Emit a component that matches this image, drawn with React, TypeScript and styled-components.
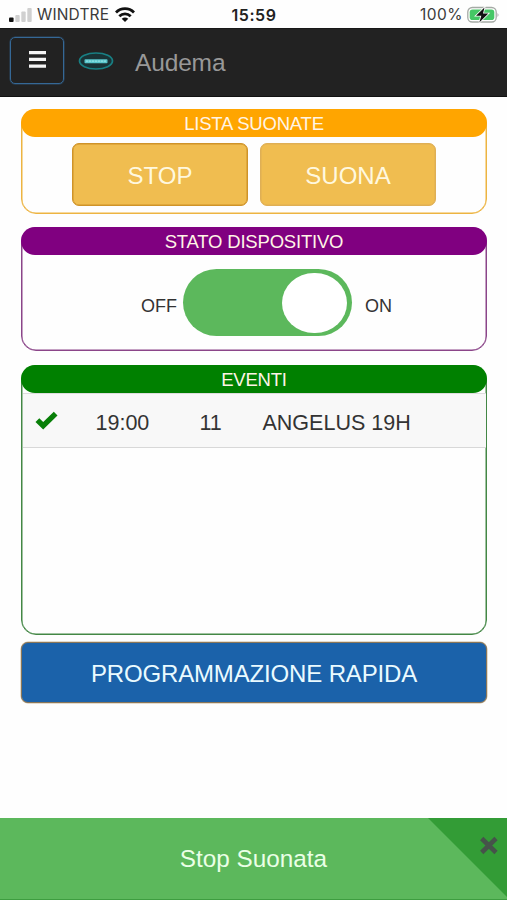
import React from "react";
import styled, { createGlobalStyle } from "styled-components";

const GlobalStyle = createGlobalStyle`
  * { box-sizing: border-box; }
  body {
    margin: 0;
    background: #fefefe;
    color: #333;
    font-family: "Liberation Sans", Arial, sans-serif;
  }
`;

const Screen = styled.div`
  display: flex;
  flex-direction: column;
  width: 507px;
  height: 900px;
  overflow: hidden;
`;

const StatusBar = styled.header`
  display: grid;
  grid-template-columns: 1fr auto 1fr;
  align-items: center;
  height: 28px;
  padding: 1px 8px 0 9px;
  color: #3a3a3a;
  font: 15.5px/20px Inter, sans-serif;
`;

const StatusGroup = styled.div<{ $end?: boolean }>`
  display: flex;
  align-items: center;
  justify-content: ${(p) => (p.$end ? "flex-end" : "flex-start")};
  gap: ${(p) => (p.$end ? "4px" : "6px")};
`;

const Carrier = styled.span`
  margin-left: -1px;
  letter-spacing: 0.15px;
`;

const Charge = styled.span`
  letter-spacing: 0.5px;
`;

const Clock = styled.span`
  color: #222;
  font-size: 16px;
  font-weight: 600;
  letter-spacing: 0.6px;
`;

const Navbar = styled.nav`
  display: flex;
  align-items: center;
  height: 69px;
  padding: 0 10px 4px;
  background: #222;
  border-top: 1px solid #181818;
  border-bottom: 1px solid #111;
`;

const MenuButton = styled.button`
  display: grid;
  place-items: center;
  width: 54px;
  height: 47px;
  padding: 0 0 2px;
  background: transparent;
  border: 1px solid #356896;
  border-radius: 5px;
  box-shadow: 0 0 0 0.5px #2c4a66;
`;

const Logo = styled.svg`
  margin: 1px 0 0 14px;
`;

const Brand = styled.span`
  margin: 4px 0 0 21px;
  color: #989898;
  font-size: 24.5px;
  line-height: 30px;
  letter-spacing: -0.15px;
`;

const Main = styled.main`
  display: flex;
  flex-direction: column;
  flex: 1;
  padding: 12px 20px 0 21px;
`;

const Panel = styled.section<{ $color: string; $line: string; $height: number; $gap: number }>`
  height: ${(p) => p.$height}px;
  margin-bottom: ${(p) => p.$gap}px;
  border: 1px solid ${(p) => p.$line};
  border-radius: 15px;
  box-shadow: inset 0 0 0 0.5px ${(p) => p.$line};
  --accent: ${(p) => p.$color};
`;

const PanelTitle = styled.h2`
  height: 28px;
  margin: -1px -1px 0;
  background: var(--accent);
  border-radius: 14px;
  color: #fff4e6;
  font-size: 18.5px;
  font-weight: 400;
  line-height: 30px;
  letter-spacing: -0.2px;
  text-align: center;
`;

const ButtonRow = styled.div`
  display: flex;
  justify-content: center;
  gap: 12px;
  margin-top: 6px;
`;

const PlayButton = styled.button<{ $active?: boolean }>`
  width: 176px;
  height: 63px;
  padding: 2px 0 0;
  background: #f0bd50;
  border: 1px solid ${(p) => (p.$active ? "#cf9329" : "#dfaf55")};
  border-radius: 7px;
  box-shadow: inset 0 0 0 0.5px ${(p) => (p.$active ? "#cf9329" : "#dfaf55")};
  color: #fff8df;
  font: 24px/28px "Liberation Sans", Arial, sans-serif;
`;

const SwitchRow = styled.div`
  display: flex;
  align-items: center;
  margin: 14px 0 0 119px;
  font-size: 18px;
  line-height: 24px;
`;

const SwitchLabel = styled.span`
  padding-top: 6px;
`;

const Switch = styled.div`
  display: flex;
  justify-content: flex-end;
  width: 169px;
  height: 67px;
  margin: 0 13px 0 6px;
  padding: 4px 5px 3px;
  background: #5cb85c;
  border-radius: 34px;
`;

const Knob = styled.div`
  width: 65px;
  height: 60px;
  background: #fff;
  border-radius: 32px / 30px;
`;

const EventRow = styled.div`
  display: grid;
  grid-template-columns: 73px 104px 63px 1fr;
  align-items: center;
  height: 55px;
  margin: 0 0.5px;
  padding: 4px 0 0;
  background: #f8f8f8;
  border-top: 1px solid #ddd;
  border-bottom: 1px solid #d8d8d8;
  font-size: 21.5px;
  line-height: 28px;
`;

const Check = styled.svg`
  margin: -4px 0 0 12px;
`;

const ScheduleButton = styled.button`
  height: 61px;
  padding: 2px 0 0;
  background: #1b62aa;
  border: 1px solid #8a7658;
  border-radius: 7px;
  box-shadow: 0 0 0 0.5px #c9b79a;
  color: #eafaff;
  font: 24px/28px "Liberation Sans", Arial, sans-serif;
  letter-spacing: -0.15px;
`;

const Toast = styled.footer`
  position: relative;
  display: grid;
  place-items: center;
  height: 82px;
  background: #5cb85c;
  border-bottom: 1px solid #3e9d40;
  color: #eaffe6;
  font-size: 24.3px;
  line-height: 28px;
`;

const ToastCorner = styled.svg`
  position: absolute;
  top: 0;
  right: 0;
`;

export default function App() {
  return (
    <Screen>
      <GlobalStyle />
      <StatusBar>
        <StatusGroup>
          <svg width="23" height="15" viewBox="0 0 23 15">
            <rect x="0" y="10.5" width="4.6" height="4.5" rx="1" fill="#111" />
            <rect x="6.3" y="8" width="4.4" height="7" rx="1" fill="#d0d0d0" />
            <rect x="12.3" y="4.5" width="4.4" height="10.5" rx="1" fill="#d0d0d0" />
            <rect x="18.3" y="1" width="4.4" height="14" rx="1" fill="#d0d0d0" />
          </svg>
          <Carrier>WINDTRE</Carrier>
          <svg width="20" height="15" viewBox="0 0 20 15" fill="none" stroke="#111" strokeWidth="2.8">
            <path d="M1 5.4C6 .4 14 .4 19 5.4M4.3 9.2C7.5 6.1 12.5 6.1 15.7 9.2" />
            <path d="M6.7 11.8Q10 9 13.3 11.8L10 15Z" fill="#111" stroke="none" />
          </svg>
        </StatusGroup>
        <Clock>15:59</Clock>
        <StatusGroup $end>
          <Charge>100%</Charge>
          <svg width="32" height="18" viewBox="0 0 32 18">
            <rect x=".8" y="1.5" width="28.4" height="14.5" rx="4.5" fill="#fff" stroke="#a5aaa5" strokeWidth="1.3" />
            <rect x="2.7" y="3.4" width="24.6" height="10.7" rx="2.8" fill="#45c765" />
            <path d="M30.5 7Q32.5 9 30.5 11Z" fill="#a5a5a5" />
            <path d="M17.5 1.5L9 9.8H14.3L12.3 16.5L21.3 7.5H16Z" fill="#111" stroke="#fff" strokeWidth="1.6" paintOrder="stroke" />
          </svg>
        </StatusGroup>
      </StatusBar>
      <Navbar>
        <MenuButton aria-label="Menu">
          <svg width="17" height="17" viewBox="0 0 17 17" fill="#f5f5f5">
            <path d="M0 0H17V3.3H0ZM0 6.7H17V10H0ZM0 13.4H17V16.7H0Z" />
          </svg>
        </MenuButton>
        <Logo width="36" height="20" viewBox="0 0 36 20">
          <ellipse cx="18" cy="10" rx="16.5" ry="8" fill="#193336" stroke="#187f83" strokeWidth="1.7" />
          <rect x="6.5" y="8.2" width="23" height="4" rx=".8" fill="#58c5cb" />
          <path d="M8 10.2H28" stroke="#91e2e5" strokeWidth="1.2" strokeDasharray="2.3 .7" />
        </Logo>
        <Brand>Audema</Brand>
      </Navbar>
      <Main>
        <Panel $color="#ffa500" $line="#edb441" $height={105} $gap={13}>
          <PanelTitle>LISTA SUONATE</PanelTitle>
          <ButtonRow>
            <PlayButton $active>STOP</PlayButton>
            <PlayButton>SUONA</PlayButton>
          </ButtonRow>
        </Panel>
        <Panel $color="#800080" $line="#8b4589" $height={124} $gap={14}>
          <PanelTitle>STATO DISPOSITIVO</PanelTitle>
          <SwitchRow>
            <SwitchLabel>OFF</SwitchLabel>
            <Switch role="switch" aria-checked="true">
              <Knob />
            </Switch>
            <SwitchLabel>ON</SwitchLabel>
          </SwitchRow>
        </Panel>
        <Panel $color="#008000" $line="#438745" $height={270} $gap={7}>
          <PanelTitle>EVENTI</PanelTitle>
          <EventRow>
            <Check width="23" height="20" viewBox="0 0 23 20">
              <path d="M.5 11L4.3 7.2L8.2 11.1L18.8.8L22.5 4.5L8.2 18.5Z" fill="#087f08" />
            </Check>
            <span>19:00</span>
            <span>11</span>
            <span>ANGELUS 19H</span>
          </EventRow>
        </Panel>
        <ScheduleButton>PROGRAMMAZIONE RAPIDA</ScheduleButton>
      </Main>
      <Toast>
        Stop Suonata
        <ToastCorner width="79" height="81" viewBox="0 0 79 81">
          <path d="M0 0H79V79Z" fill="#339c36" />
          <path d="M53.7 20.5L68 34.5M68 20.5L53.7 34.5" stroke="#46534a" strokeWidth="4.6" />
        </ToastCorner>
      </Toast>
    </Screen>
  );
}
